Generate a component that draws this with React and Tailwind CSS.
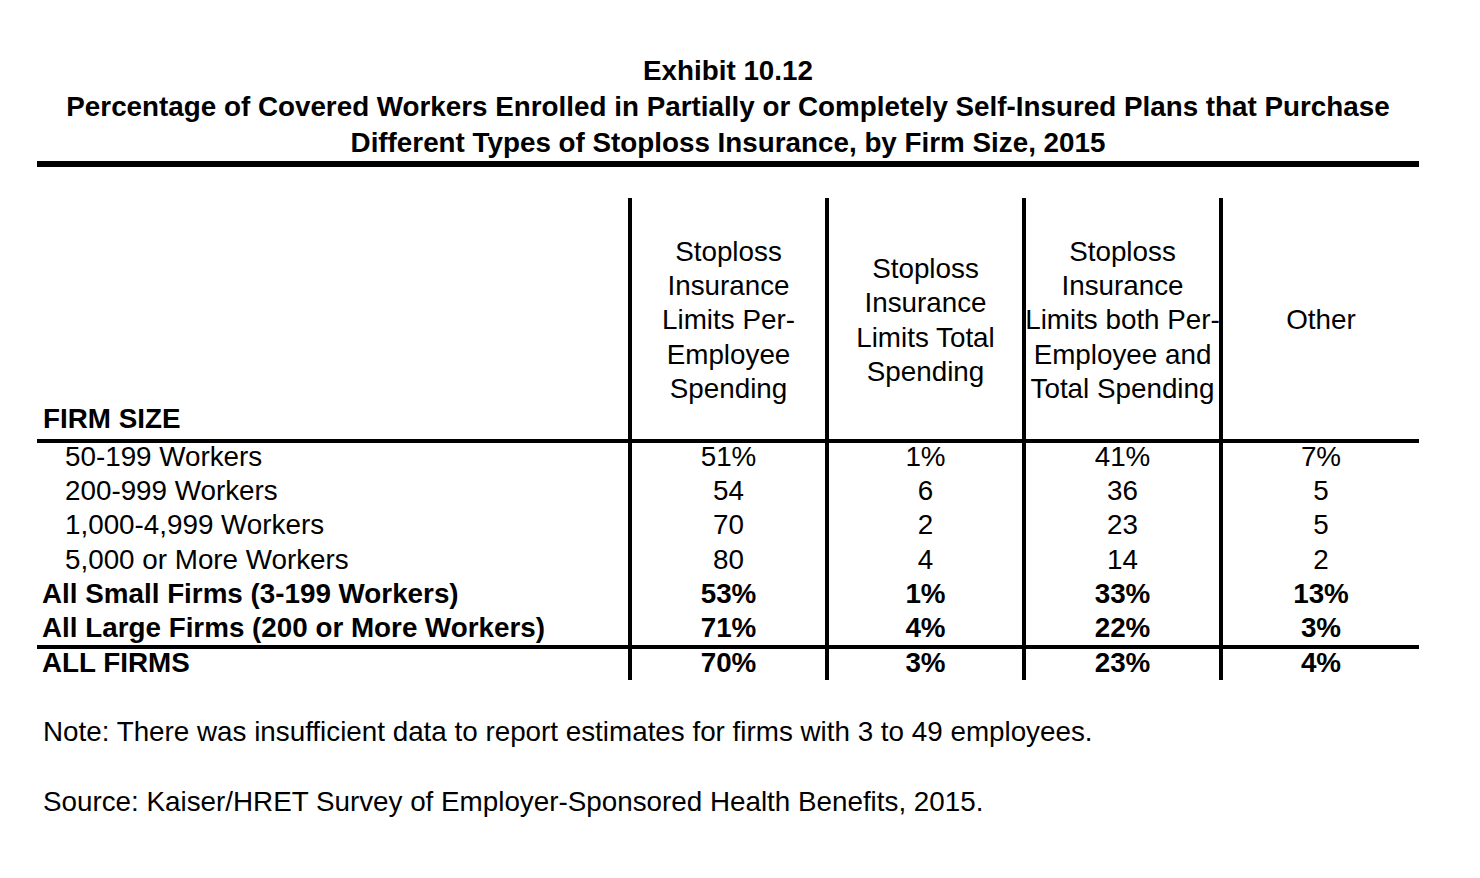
const COLS = 'grid grid-cols-[591px_197px_197px_197px_1fr]';

const rows = [
  { label: '50-199 Workers', values: ['51%', '1%', '41%', '7%'], indent: true },
  { label: '200-999 Workers', values: ['54', '6', '36', '5'], indent: true },
  { label: '1,000-4,999 Workers', values: ['70', '2', '23', '5'], indent: true },
  { label: '5,000 or More Workers', values: ['80', '4', '14', '2'], indent: true },
  { label: 'All Small Firms (3-199 Workers)', values: ['53%', '1%', '33%', '13%'], bold: true },
  { label: 'All Large Firms (200 or More Workers)', values: ['71%', '4%', '22%', '3%'], bold: true },
];

const headers = [
  ['Stoploss', 'Insurance', 'Limits Per-', 'Employee', 'Spending'],
  ['Stoploss', 'Insurance', 'Limits Total', 'Spending'],
  ['Stoploss', 'Insurance', 'Limits both Per-', 'Employee and', 'Total Spending'],
  ['Other'],
];

const DataRow = ({ label, values, indent, bold, className = '' }) => (
  <div className={`${COLS} ${className} ${bold ? 'font-bold' : ''}`}>
    <div className={`whitespace-nowrap ${indent ? 'pl-[28px]' : 'pl-[5px]'}`}>{label}</div>
    {values.map((v, i) => (
      <div key={i} className="border-l-4 border-black text-center">
        {v}
      </div>
    ))}
  </div>
);

export default function App() {
  return (
    <div className="h-[878px] w-[1480px] bg-white font-['Liberation_Sans',Arial,sans-serif] text-[27.8px] text-black">
      <div className="mx-[37px] w-[1382px]">
        {/* Title */}
        <div className="border-b-[6px] border-black pt-[53px] text-center font-bold leading-[36px]">
          <p>Exhibit 10.12</p>
          <p className="whitespace-nowrap">
            Percentage of Covered Workers Enrolled in Partially or Completely Self-Insured Plans that Purchase
          </p>
          <p>Different Types of Stoploss Insurance, by Firm Size, 2015</p>
        </div>

        {/* Table */}
        <div className="mt-[31px] leading-[34.2px]">
          <div className={`${COLS} h-[245px] border-b-4 border-black`}>
            <div className="flex items-end pb-[3px] pl-[6px] font-bold">FIRM SIZE</div>
            {headers.map((lines, i) => (
              <div
                key={i}
                className="flex flex-col items-center justify-center border-l-4 border-black pt-[4px] text-center"
              >
                {lines.map((l) => (
                  <span key={l} className="whitespace-nowrap">
                    {l}
                  </span>
                ))}
              </div>
            ))}
          </div>

          <div className="-mt-[3px]">
            {rows.map((r) => (
              <DataRow key={r.label} {...r} />
            ))}
          </div>

          <div className="border-t-4 border-black">
            <DataRow
              label="ALL FIRMS"
              values={['70%', '3%', '23%', '4%']}
              bold
              className="-mt-[3px] pb-[3px]"
            />
          </div>
        </div>

        {/* Notes */}
        <div className="pl-[6px] leading-[34.2px]">
          <p className="mt-[32px]">Note: There was insufficient data to report estimates for firms with 3 to 49 employees.</p>
          <p className="mt-[35px]">Source: Kaiser/HRET Survey of Employer-Sponsored Health Benefits, 2015.</p>
        </div>
      </div>
    </div>
  );
}
